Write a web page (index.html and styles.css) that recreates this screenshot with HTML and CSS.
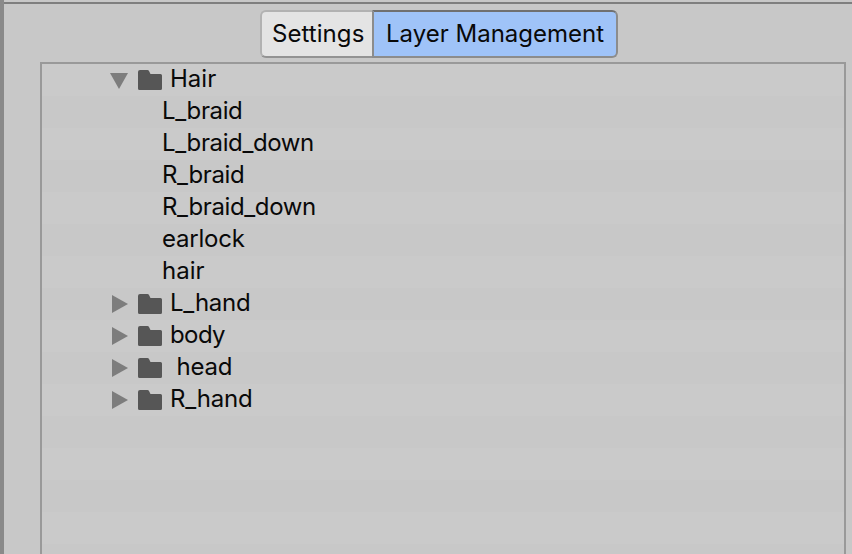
FILE: index.html
```html
<!DOCTYPE html>
<html lang="en">
<head>
<meta charset="utf-8">
<title>Layer Management</title>
<link rel="stylesheet" href="styles.css">
</head>
<body>
<svg class="defs" width="0" height="0" aria-hidden="true">
  <symbol id="folder" viewBox="0 0 24 20"><path d="M2 0H9.5Q10.5 0 11 1L12.5 4H22.5Q24 4 24 5.5V18.5Q24 20 22.5 20H1.5Q0 20 0 18.5V2Q0 0 2 0Z"/></symbol>
  <symbol id="closed" viewBox="0 0 18 18"><path d="M2 0L18 9L2 18Z"/></symbol>
  <symbol id="open" viewBox="0 0 18 18"><path d="M0 2H18L9 18Z"/></symbol>
</svg>
<div class="window">
  <div class="tabs">
    <button class="tab">Settings</button>
    <button class="tab active">Layer Management</button>
  </div>
  <ul class="tree">
    <li class="row"><svg class="arrow"><use href="#open"/></svg><svg class="folder"><use href="#folder"/></svg><span>Hair</span></li>
    <li class="row leaf tight"><span>L_braid</span></li>
    <li class="row leaf tight"><span>L_braid_down</span></li>
    <li class="row leaf tight"><span>R_braid</span></li>
    <li class="row leaf tight"><span>R_braid_down</span></li>
    <li class="row leaf snug"><span>earlock</span></li>
    <li class="row leaf"><span>hair</span></li>
    <li class="row snug"><svg class="arrow"><use href="#closed"/></svg><svg class="folder"><use href="#folder"/></svg><span>L_hand</span></li>
    <li class="row tighter"><svg class="arrow"><use href="#closed"/></svg><svg class="folder"><use href="#folder"/></svg><span>body</span></li>
    <li class="row snug"><svg class="arrow"><use href="#closed"/></svg><svg class="folder"><use href="#folder"/></svg><span> head</span></li>
    <li class="row snug"><svg class="arrow"><use href="#closed"/></svg><svg class="folder"><use href="#folder"/></svg><span>R_hand</span></li>
  </ul>
</div>
</body>
</html>
```
FILE: styles.css
```css
* { box-sizing: border-box; }
body {
  display: flow-root;
  margin: 0;
  height: 554px;
  overflow: hidden;
  background: #c8c8c8;
  border-left: 4px solid #8a8a8a;
  font-family: Inter, sans-serif;
  font-size: 24px;
  color: #090909;
}
.defs { display: none; }
.window {
  height: 552px;
  margin-top: 2px;
  padding: 6px 6px 0 36px;
  border-top: 2px solid #7f7f7f;
  display: flex;
  flex-direction: column;
}
.tabs {
  display: flex;
  height: 48px;
  margin: 0 0 4px 220px;
}
.tab {
  font: inherit;
  color: inherit;
  width: 112px;
  padding: 0 0 2px 10px;
  text-align: left;
  letter-spacing: 0.06px;
  white-space: nowrap;
  background: #e4e4e4;
  border: 2px solid #b2b2b2;
  border-bottom-color: #939393;
  border-right: 0;
  border-radius: 6px 0 0 6px;
}
.tab.active {
  width: 246px;
  padding-left: 12px;
  letter-spacing: 0;
  background: #9fc3f8;
  border: 2px solid #8c8c8c;
  border-top-color: #707070;
  border-radius: 0 6px 6px 0;
}
.tree {
  flex: 1;
  margin: 0;
  padding: 0;
  list-style: none;
  border: 2px solid #999;
  border-bottom: 0;
  background: repeating-linear-gradient(#cacaca 0 32px, #c8c8c8 32px 64px);
}
.row {
  display: flex;
  height: 32px;
  padding-left: 68px;
  line-height: 30px;
  white-space: pre;
}
.leaf { padding-left: 120px; }
.snug { letter-spacing: -0.22px; }
.tight { letter-spacing: -0.38px; }
.tighter { letter-spacing: -0.6px; }
.arrow {
  width: 18px;
  height: 18px;
  margin: 7px 10px 0 0;
  fill: #7d7d7d;
}
.folder {
  width: 24px;
  height: 20px;
  margin: 6px 8px 0 0;
  fill: #565656;
}
```
